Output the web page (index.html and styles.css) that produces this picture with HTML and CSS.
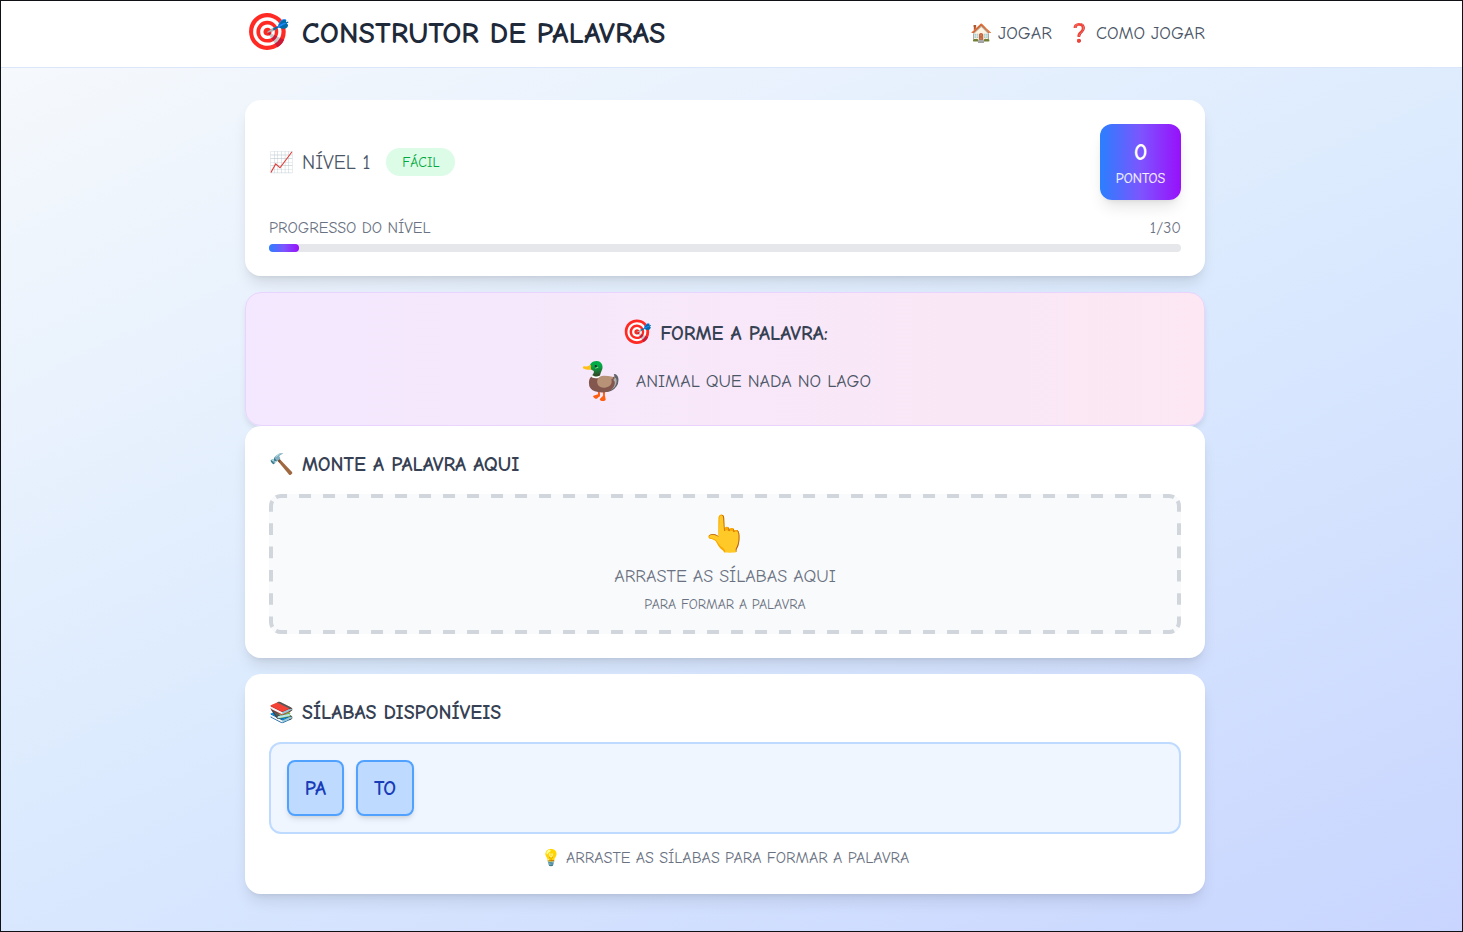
FILE: index.html
```html
<!DOCTYPE html>
<html lang="pt-BR">
<head>
<meta charset="utf-8">
<title>Construtor de Palavras</title>
<link rel="stylesheet" href="styles.css">
</head>
<body>
<div class="app">
  <header class="header">
    <div class="header-inner">
      <div class="brand"><span class="emoji emoji-xl">🎯</span><h1 class="title">CONSTRUTOR DE PALAVRAS</h1></div>
      <nav class="nav">
        <a class="nav-link">🏠 JOGAR</a>
        <a class="nav-link">❓ COMO JOGAR</a>
      </nav>
    </div>
  </header>
  <main class="main">
    <section class="card level-card">
      <div class="level-row">
        <div class="level"><span class="emoji emoji-md">📈</span><span class="level-name">NÍVEL 1</span><span class="badge">FÁCIL</span></div>
        <div class="score"><span class="score-value">0</span><span class="score-label">PONTOS</span></div>
      </div>
      <div class="progress-row"><span>PROGRESSO DO NÍVEL</span><span>1/30</span></div>
      <div class="bar"><div class="bar-fill" style="width:3.33%"></div></div>
    </section>
    <section class="clue">
      <div class="clue-row"><span class="emoji emoji-lg">🎯</span><h2 class="heading">FORME A PALAVRA:</h2></div>
      <div class="clue-row clue-hint"><span class="emoji emoji-xl">🦆</span><span class="hint-text">ANIMAL QUE NADA NO LAGO</span></div>
    </section>
    <section class="card build-card">
      <div class="card-head"><span class="emoji emoji-md">🔨</span><h2 class="heading">MONTE A PALAVRA AQUI</h2></div>
      <div class="drop">
        <svg class="dashes" width="912" height="140" viewBox="0 0 912 140">
          <g class="dash-h">
            <path d="M7 3.34A10 10 0 0 1 12 2H900A10 10 0 0 1 905 3.34"/>
            <path d="M7 136.66A10 10 0 0 0 12 138H900A10 10 0 0 0 905 136.66"/>
          </g>
          <g class="dash-v">
            <path d="M3.34 7A10 10 0 0 0 2 12V128A10 10 0 0 0 3.34 133"/>
            <path d="M908.66 7A10 10 0 0 1 910 12V128A10 10 0 0 1 908.66 133"/>
          </g>
        </svg>
        <span class="emoji emoji-xl">👆</span>
        <span class="drop-main">ARRASTE AS SÍLABAS AQUI</span>
        <span class="drop-sub">PARA FORMAR A PALAVRA</span>
      </div>
    </section>
    <section class="card syl-card">
      <div class="card-head"><span class="emoji emoji-md">📚</span><h2 class="heading">SÍLABAS DISPONÍVEIS</h2></div>
      <div class="tray"><button class="tile">PA</button><button class="tile tile-wide">TO</button></div>
      <div class="tip">💡 ARRASTE AS SÍLABAS PARA FORMAR A PALAVRA</div>
    </section>
  </main>
</div>
</body>
</html>
```
FILE: styles.css
```css
* { box-sizing: border-box; }
body { margin: 0; font-family: "Comic Neue", "Comic Relief", cursive, sans-serif; font-size: 16px; line-height: 24px; }
h1, h2 { margin: 0; }
span, a, h1, h2 { white-space: nowrap; }
.app { height: 932px; border: 1px solid #101114; overflow: hidden; background: linear-gradient(155deg, #f8fafc 0%, #dbeafe 52%, #c6d2ff 107%); }
.emoji { font-family: "Noto Color Emoji", sans-serif; line-height: 1; flex: none; text-align: center; }
.emoji-md { font-size: 20px; width: 25px; }
.emoji-lg { font-size: 24px; width: 30px; }
.emoji-xl { font-size: 36px; }

.header { height: 67px; background: #fff; border-bottom: 1px solid #dbe6fb; }
.header-inner { width: 960px; height: 66px; margin-left: 244px; display: flex; justify-content: space-between; align-items: center; }
.brand { display: flex; align-items: center; gap: 12px; }
.brand .emoji { margin-bottom: 4px; }
.title { font-size: 30px; font-weight: 700; color: #1e2939; line-height: 36px; }
.nav { display: flex; gap: 16px; color: #4a5565; font-size: 18px; line-height: 28px; }

.main { width: 960px; margin: 32px 0 0 244px; display: flex; flex-direction: column; }
.card { background: #fff; border-radius: 16px; padding: 24px; box-shadow: 0 10px 15px -3px rgba(0,0,0,.1), 0 4px 6px -4px rgba(0,0,0,.1); }
.level-card { height: 176px; margin-bottom: 16px; }
.level-row { display: flex; justify-content: space-between; align-items: center; height: 76px; }
.level { display: flex; align-items: center; }
.level-name { font-size: 20px; color: #4a5565; margin: 0 16px 0 8px; padding-top: 2px; }
.badge { width: 69px; height: 28px; border-radius: 14px; background: #dcfce7; color: #00a63e; font-size: 14px; line-height: 28px; padding-top: 1px; text-align: center; }
.score { width: 81px; height: 76px; border-radius: 12px; background: linear-gradient(90deg, #2b7fff, #7c55ff 50%, #9810fa); color: #fff; display: flex; flex-direction: column; align-items: center; padding-top: 12px; box-shadow: 0 10px 15px -3px rgba(0,0,0,.1), 0 4px 6px -4px rgba(0,0,0,.1); }
.score-value { font-size: 24px; font-weight: 700; line-height: 32px; }
.score-label { font-size: 14px; line-height: 20px; padding-top: 1px; -webkit-text-stroke: .2px #fff; opacity: .92; }
.progress-row { display: flex; justify-content: space-between; color: #6a7282; margin-top: 16px; height: 28px; }
.bar { height: 8px; border-radius: 4px; background: #e5e7eb; }
.bar-fill { height: 8px; border-radius: 4px; background: linear-gradient(90deg, #2b7fff, #7c55ff 50%, #9810fa); }

.clue { height: 134px; border: 1px solid #e9d4ff; border-radius: 16px; background: linear-gradient(90deg, #f3e8ff, #fce7f3); display: flex; flex-direction: column; align-items: center; padding-top: 24px; box-shadow: 0 4px 6px -1px rgba(0,0,0,.1); }
.clue-row { display: flex; align-items: center; gap: 8px; height: 32px; }
.clue-row .emoji-lg { margin-bottom: 2px; }
.clue-hint { gap: 12px; height: 48px; margin-top: 8px; color: #4a5565; font-size: 18px; }
.hint-text { padding-top: 2px; }
.heading { font-size: 20px; font-weight: 700; color: #364153; line-height: 28px; padding-top: 2px; }
.card-head { display: flex; align-items: center; gap: 8px; height: 28px; margin-bottom: 16px; }
.build-card { height: 232px; margin-bottom: 16px; }
.drop { position: relative; height: 140px; border-radius: 12px; background: #f9fafb; color: #6a7282; display: flex; flex-direction: column; align-items: center; padding-top: 22px; }
.drop .emoji { margin-left: 2px; }
.dashes { position: absolute; inset: 0; fill: none; stroke: #d1d5dc; stroke-width: 4; }
.dash-h { stroke-dasharray: 12; stroke-dashoffset: .76; }
.dash-v { stroke-dasharray: 11.64; stroke-dashoffset: .76; }
.drop-main { margin-top: 13px; font-size: 18px; line-height: 24px; }
.drop-sub { font-size: 14px; line-height: 20px; margin-top: 6px; }
.syl-card { height: 220px; }
.tray { height: 92px; border: 2px solid #bedbff; border-radius: 12px; background: #eff6ff; padding: 16px; display: flex; gap: 12px; }
.tile { width: 57px; height: 56px; padding: 0; border: 2px solid #51a2ff; border-radius: 8px; background: #bedbff; color: #193cb8; font-family: inherit; font-weight: 700; font-size: 20px; box-shadow: 0 4px 6px -1px rgba(0,0,0,.1), 0 2px 4px -2px rgba(0,0,0,.1); }
.tile-wide { width: 58px; }
.tip { text-align: center; margin-top: 12px; color: #6a7282; }
```
